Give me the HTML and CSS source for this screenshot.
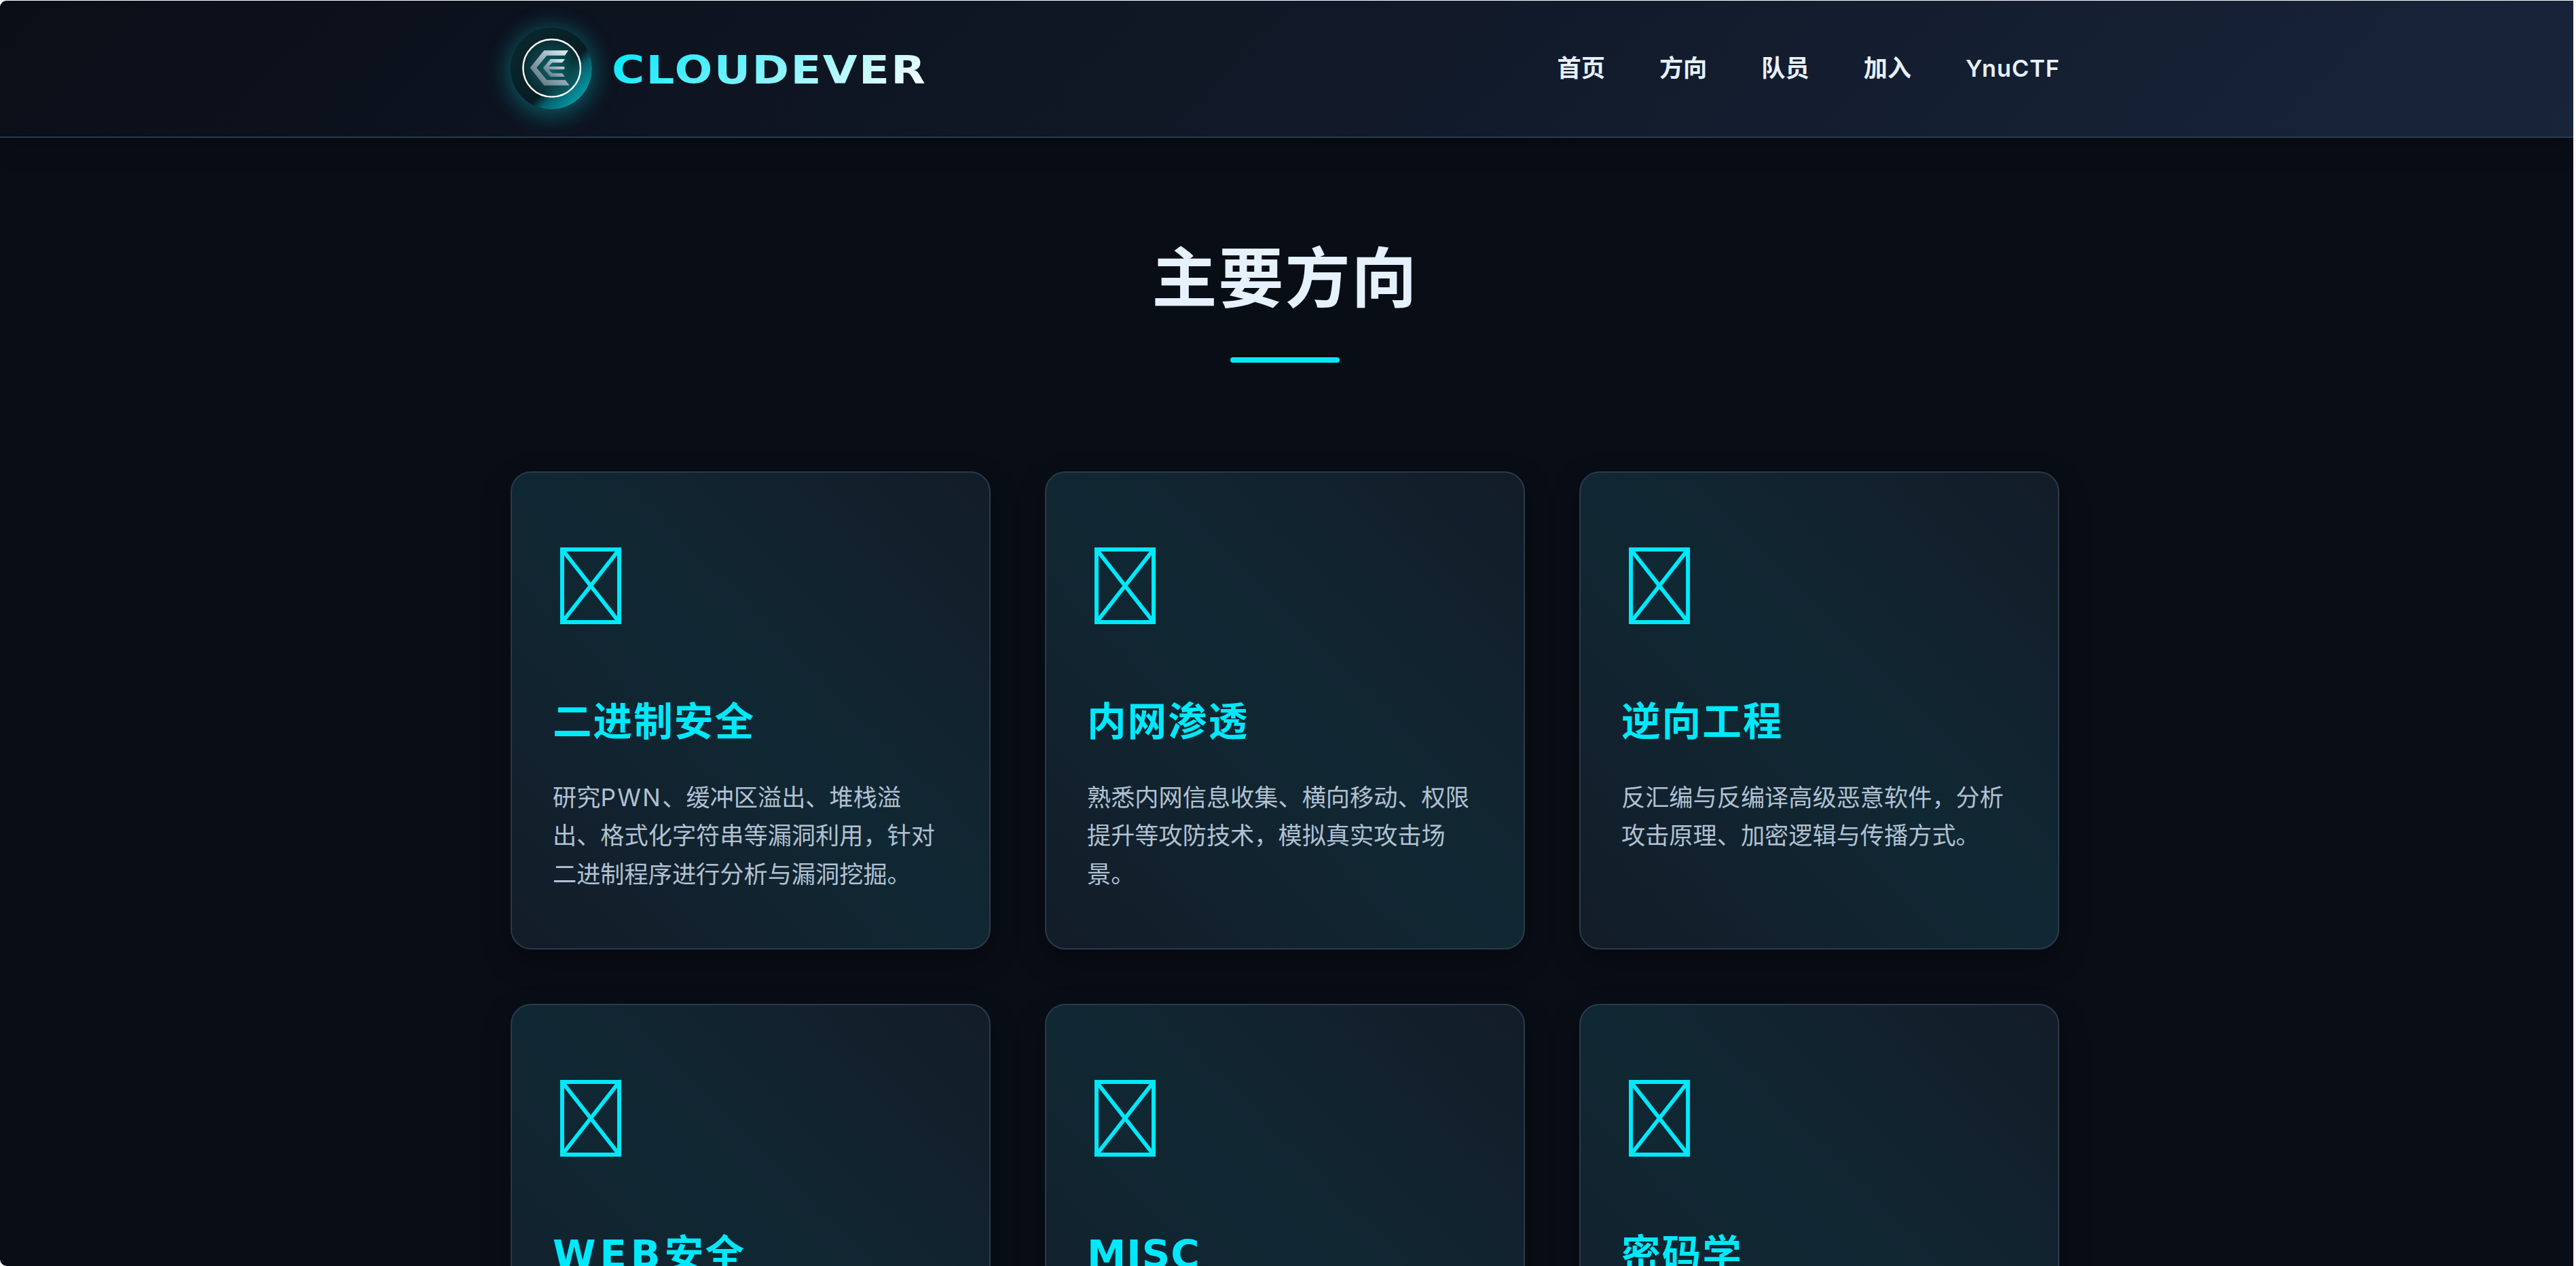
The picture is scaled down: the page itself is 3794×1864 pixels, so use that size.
FILE: index.html
```html
<!DOCTYPE html>
<html lang="zh-CN">
<head>
<meta charset="utf-8">
<title>CLOUDEVER</title>
<link rel="stylesheet" href="styles.css">
</head>
<body>
<div class="page">
  <header class="header">
    <div class="bar">
      <div class="brand">
        <svg class="logo" viewBox="0 0 120 120">
          <defs>
            <linearGradient id="disc" x1="0" y1="0" x2="1" y2="1">
              <stop offset="0" stop-color="#0a2a31"/><stop offset=".59" stop-color="#081b22"/><stop offset=".68" stop-color="#075f69"/><stop offset=".85" stop-color="#0597a3"/>
            </linearGradient>
            <radialGradient id="core"><stop offset="0" stop-color="#0c6468"/><stop offset=".5" stop-color="#0b5256" stop-opacity=".8"/><stop offset="1" stop-color="#0a3c42" stop-opacity=".4"/></radialGradient>
            <linearGradient id="metal" x1="1" y1="0" x2="0" y2="1"><stop offset="0" stop-color="#e6f3f7"/><stop offset=".5" stop-color="#93a9b6"/><stop offset="1" stop-color="#536673"/></linearGradient>
          </defs>
          <circle cx="60" cy="60" r="60" fill="url(#disc)"/>
          <circle cx="60.7" cy="59.3" r="42.300" fill="url(#core)" stroke="#fff" stroke-width="2.4"/>
          <path d="M49.300 33.300H85L80 40.700H53.300L38.300 58.700L53.300 76.700H80.700L86.700 84.700H49.300L28.700 58.700Z" fill="url(#metal)"/>
          <path d="M58.700 46H80L76 51.300H61.300L56 57H78.300L80 59L78.300 61.300H56L61.300 66.700H76L80 72H58.700L47.700 59Z" fill="url(#metal)"/>
        </svg>
        <span class="name">CLOUDEVER</span>
      </div>
      <nav class="nav"><a>首页</a><a>方向</a><a>队员</a><a>加入</a><a class="latin">YnuCTF</a></nav>
    </div>
  </header>
  <main class="section">
    <h1 class="title">主要方向</h1>
    <div class="cards">
      <article class="card"><svg class="icon" viewBox="0 0 90 113"><path d="M3 3H87V110H3ZM3 3L87 110M87 3L3 110"/></svg><h2>二进制安全</h2><p>研究<span class="pwn">PWN</span>、缓冲区溢出、堆栈溢出、格式化字符串等漏洞利用，针对二进制程序进行分析与漏洞挖掘。</p></article>
      <article class="card"><svg class="icon" viewBox="0 0 90 113"><path d="M3 3H87V110H3ZM3 3L87 110M87 3L3 110"/></svg><h2>内网渗透</h2><p>熟悉内网信息收集、横向移动、权限提升等攻防技术，模拟真实攻击场景。</p></article>
      <article class="card"><svg class="icon" viewBox="0 0 90 113"><path d="M3 3H87V110H3ZM3 3L87 110M87 3L3 110"/></svg><h2>逆向工程</h2><p>反汇编与反编译高级恶意软件，分析攻击原理、加密逻辑与传播方式。</p></article>
      <article class="card"><svg class="icon" viewBox="0 0 90 113"><path d="M3 3H87V110H3ZM3 3L87 110M87 3L3 110"/></svg><h2><span class="web">WEB</span>安全</h2></article>
      <article class="card"><svg class="icon" viewBox="0 0 90 113"><path d="M3 3H87V110H3ZM3 3L87 110M87 3L3 110"/></svg><h2><span class="misc">MISC</span></h2></article>
      <article class="card"><svg class="icon" viewBox="0 0 90 113"><path d="M3 3H87V110H3ZM3 3L87 110M87 3L3 110"/></svg><h2>密码学</h2></article>
    </div>
  </main>
</div>
</body>
</html>
```
FILE: styles.css
```css
* { box-sizing: border-box; margin: 0; padding: 0; }
html { background: #fbfcfc; overflow: hidden; }
body { width: 3794px; height: 1864px; padding: 1px 4px 0 0; overflow: hidden; font-family: Inter, "Noto Sans CJK SC", sans-serif; }
.page { height: 1863px; overflow: hidden; background: #090d15; border-radius: 10px 0 0 10px; }
.header { position: relative; height: 202px; border-bottom: 2px solid #2a3a4f; background: linear-gradient(135deg, #0a0e17, #121b2b 60%, #17243a); box-shadow: 0 4px 40px rgba(0, 0, 0, .25); }
.bar { display: flex; justify-content: space-between; align-items: center; width: 2282px; height: 200px; margin-left: 752px; }
.brand { display: flex; align-items: center; gap: 29px; }
.logo { display: block; width: 120px; height: 120px; border-radius: 50%; box-shadow: 0 0 36px rgba(0, 229, 240, .22), 0 8px 40px rgba(0, 229, 240, .25); }
.name { padding-top: 5px; font: bold 57.6px/1 "DejaVu Sans", sans-serif; letter-spacing: 2px; color: transparent; background: linear-gradient(135deg, #00e8fb, #fff); -webkit-background-clip: text; background-clip: text; transform: scaleX(1.143); transform-origin: left; }
.nav { display: flex; gap: 80px; align-items: baseline; padding-bottom: 2px; font-size: 35.2px; line-height: 44px; font-weight: 600; color: #e6f1ff; }
.nav a { white-space: nowrap; }
.latin { width: 139px; font-size: 34.400px; letter-spacing: .9px; }
.section { width: 2281px; margin-left: 752px; padding-top: 120px; }
.title { height: 211px; font: bold 96px/160px "Noto Sans CJK SC", sans-serif; letter-spacing: 2px; text-align: center; color: #e6f1ff; }
.title::after { content: ""; display: block; width: 161px; height: 8px; margin: 43px auto 0; border-radius: 4px; background: #00e8fb; }
.cards { display: grid; grid-template-columns: repeat(3, 1fr); grid-auto-rows: 704px; gap: 80px; margin-top: 160px; }
.card { padding: 110px 60px 0; border: 2px solid #2a3a4c; border-radius: 30px; background: linear-gradient(45deg, #131c29, #102833 50%, #131c29); box-shadow: 0 16px 44px rgba(0, 0, 0, .3); }
.icon { display: block; width: 90px; height: 113px; margin-left: 11px; fill: none; stroke: #00e8fb; stroke-width: 6px; }
.card h2 { height: 90px; margin-top: 94px; font: bold 57.6px/90px "Noto Sans CJK SC", sans-serif; letter-spacing: 2px; color: #00e8fb; }
.card .web, .card .misc { font-family: "DejaVu Sans", sans-serif; }
.card .web { letter-spacing: 6px; }
.card .misc { letter-spacing: 1px; }
.card p { margin-top: 43px; font-size: 35.2px; line-height: 56.32px; color: #b1c1d3; }
.pwn { letter-spacing: 2.400px; }
```
